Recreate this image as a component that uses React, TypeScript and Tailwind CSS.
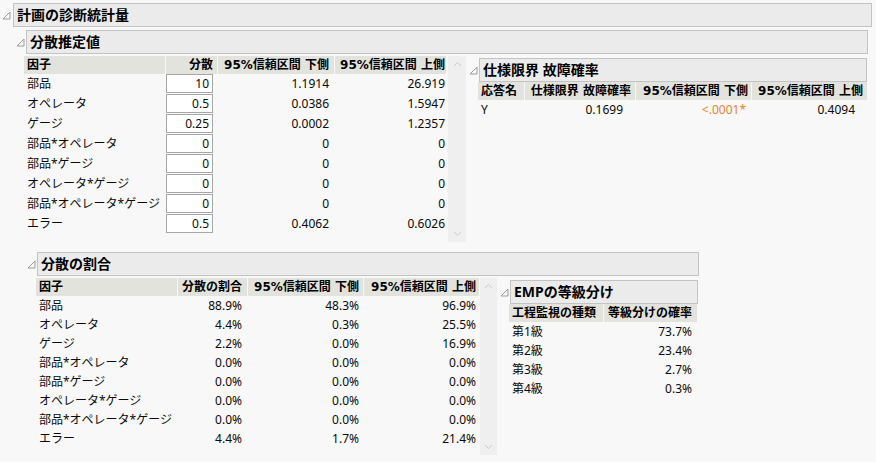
import type { ReactNode } from "react"

function Tri() {
  return (
    <svg width="9" height="9" viewBox="0 0 9 9" className="shrink-0">
      <path d="M8 1 V8 H1 Z" fill="none" stroke="#9c9c9c" strokeWidth="1" />
    </svg>
  )
}

function OutlineBox({ title, className }: { title: string; className: string }) {
  return (
    <div className={`h-[24px] border border-[#c3c3c3] bg-[#ebebeb] flex items-center pl-[3px] text-[14px] font-bold leading-none whitespace-nowrap text-black ${className}`}>
      {title}
    </div>
  )
}

function Scrollbar({ className }: { className: string }) {
  return (
    <div className={`bg-[#efefef] flex flex-col items-center justify-between pt-[5px] pb-[5px] ${className}`}>
      <svg width="9" height="6" viewBox="0 0 9 6">
        <path d="M1 5 L4.5 1.5 L8 5" fill="none" stroke="#c9c9c9" />
      </svg>
      <svg width="9" height="6" viewBox="0 0 9 6">
        <path d="M1 1 L4.5 4.5 L8 1" fill="none" stroke="#c9c9c9" />
      </svg>
    </div>
  )
}

type TableProps = {
  grid: string
  cells: string[]
  headCells?: string[]
  head: string[]
  rows: ReactNode[][]
  rowH: string
}

function Table({ grid, cells, headCells, head, rows, rowH }: TableProps) {
  const hc = headCells ?? cells
  return (
    <div className={`grid gap-x-[1px] ${grid}`}>
      {head.map((h, i) => (
        <div key={"h" + i} className={`h-[18px] bg-[#e3e3de] font-bold text-black flex items-center leading-none whitespace-nowrap font-['DejaVu_Sans','Noto_Sans_CJK_JP',sans-serif] ${hc[i]}`}>
          {h}
        </div>
      ))}
      {rows.map((r, ri) =>
        r.map((c, ci) => (
          <div key={ri + "-" + ci} className={`${rowH} flex items-center leading-none whitespace-nowrap ${cells[ci]}`}>
            {c}
          </div>
        ))
      )}
    </div>
  )
}

function InputCell({ v }: { v: string }) {
  return (
    <div className="self-start w-full h-[19px] border border-[#a6a6a6] bg-white flex items-center justify-end pr-[3px]">
      {v}
    </div>
  )
}

const factors = [
  "部品",
  "オペレータ",
  "ゲージ",
  "部品*オペレータ",
  "部品*ゲージ",
  "オペレータ*ゲージ",
  "部品*オペレータ*ゲージ",
  "エラー",
]

const est = [
  ["10", "1.1914", "26.919"],
  ["0.5", "0.0386", "1.5947"],
  ["0.25", "0.0002", "1.2357"],
  ["0", "0", "0"],
  ["0", "0", "0"],
  ["0", "0", "0"],
  ["0", "0", "0"],
  ["0.5", "0.4062", "0.6026"],
]

const pct = [
  ["88.9%", "48.3%", "96.9%"],
  ["4.4%", "0.3%", "25.5%"],
  ["2.2%", "0.0%", "16.9%"],
  ["0.0%", "0.0%", "0.0%"],
  ["0.0%", "0.0%", "0.0%"],
  ["0.0%", "0.0%", "0.0%"],
  ["0.0%", "0.0%", "0.0%"],
  ["4.4%", "1.7%", "21.4%"],
]

const emp = [
  ["第1級", "73.7%"],
  ["第2級", "23.4%"],
  ["第3級", "2.7%"],
  ["第4級", "0.3%"],
]

export default function App() {
  return (
    <div className="w-[876px] h-[462px] overflow-hidden bg-[#f8f8f8] pt-[3px] text-[12px] text-[#0a0a0a] font-['Noto_Sans','Noto_Sans_CJK_JP',sans-serif]">
      <div className="flex items-center">
        <div className="w-[13px] pl-[2px] flex items-center"><Tri /></div>
        <OutlineBox title="計画の診断統計量" className="w-[859px]" />
      </div>

      <div className="flex items-center mt-[3px]">
        <div className="w-[26px] pl-[16px] flex items-center"><Tri /></div>
        <OutlineBox title="分散推定値" className="w-[842px]" />
      </div>

      <div className="flex items-start mt-[2px] pl-[24px]">
        <Table
          grid="grid-cols-[141px_51px_116px_111px]"
          cells={["pl-[3px]", "justify-end pr-[4px]", "justify-end pr-[5px]", "justify-end pr-[1px]"]}
          head={["因子", "分散", "95%信頼区間 下側", "95%信頼区間 上側"]}
          rowH="h-[20px]"
          rows={factors.map((f, i) => [f, <InputCell v={est[i][0]} />, est[i][1], est[i][2]])}
        />
        <Scrollbar className="ml-[2px] w-[18px] h-[186px]" />
        <div className="ml-[3px] mt-[2px] flex flex-col">
          <div className="flex items-center">
            <div className="w-[10px] flex items-center"><Tri /></div>
            <OutlineBox title="仕様限界 故障確率" className="w-[388px]" />
          </div>
          <div className="pl-[9px]">
            <Table
              grid="grid-cols-[46px_110px_115px_115px]"
              cells={["pl-[3px]", "justify-end pr-[12px]", "justify-end pr-[5px]", "justify-end pr-[12px]"]}
              headCells={["pl-[3px]", "justify-end pr-[4px]", "justify-end pr-[3px]", "justify-end pr-[4px]"]}
              head={["応答名", "仕様限界 故障確率", "95%信頼区間 下側", "95%信頼区間 上側"]}
              rowH="h-[19px]"
              rows={[["Y", "0.1699", <span className="text-[#e9832c]">&lt;.0001*</span>, "0.4094"]]}
            />
          </div>
        </div>
      </div>

      <div className="flex items-center mt-[10px]">
        <div className="w-[37px] pl-[27px] flex items-center"><Tri /></div>
        <OutlineBox title="分散の割合" className="w-[662px]" />
      </div>

      <div className="flex items-start mt-[2px] pl-[36px]">
        <Table
          grid="grid-cols-[141px_69px_115px_115px]"
          cells={["pl-[3px]", "justify-end pr-[5px]", "justify-end pr-[4px]", "justify-end pr-[3px]"]}
          head={["因子", "分散の割合", "95%信頼区間 下側", "95%信頼区間 上側"]}
          rowH="h-[19px]"
          rows={factors.map((f, i) => [f, pct[i][0], pct[i][1], pct[i][2]])}
        />
        <Scrollbar className="ml-[1px] w-[17px] h-[177px]" />
        <div className="ml-[3px] mt-[2px] flex flex-col">
          <div className="flex items-center">
            <div className="w-[10px] flex items-center"><Tri /></div>
            <OutlineBox title="EMPの等級分け" className="w-[188px]" />
          </div>
          <div className="pl-[9px]">
            <Table
              grid="grid-cols-[94px_93px]"
              cells={["pl-[3px]", "justify-end pr-[5px]"]}
              head={["工程監視の種類", "等級分けの確率"]}
              rowH="h-[19px]"
              rows={emp}
            />
          </div>
        </div>
      </div>
    </div>
  )
}
